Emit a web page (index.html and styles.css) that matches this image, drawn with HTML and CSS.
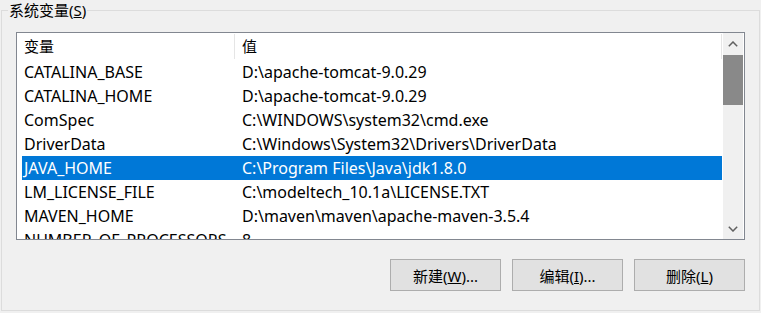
FILE: index.html
```html
<!DOCTYPE html>
<html lang="zh-CN">
<head>
    <meta charset="UTF-8">
    <title>系统变量</title>
    <link rel="stylesheet" href="styles.css">
</head>
<body>
    <fieldset class="group">
        <legend>系统变量(<u>S</u>)</legend>

        <div class="list">
            <div class="table">
                <div class="head">
                    <div class="head-cell">变量</div>
                    <div class="head-cell">值</div>
                </div>
                <div class="row"><span class="name">CATALINA_BASE</span><span class="value">D:\apache-tomcat-9.0.29</span></div>
                <div class="row"><span class="name">CATALINA_HOME</span><span class="value">D:\apache-tomcat-9.0.29</span></div>
                <div class="row"><span class="name">ComSpec</span><span class="value">C:\WINDOWS\system32\cmd.exe</span></div>
                <div class="row"><span class="name">DriverData</span><span class="value">C:\Windows\System32\Drivers\DriverData</span></div>
                <div class="row selected"><span class="name">JAVA_HOME</span><span class="value">C:\Program Files\Java\jdk1.8.0</span></div>
                <div class="row"><span class="name">LM_LICENSE_FILE</span><span class="value">C:\modeltech_10.1a\LICENSE.TXT</span></div>
                <div class="row"><span class="name">MAVEN_HOME</span><span class="value">D:\maven\maven\apache-maven-3.5.4</span></div>
                <div class="row"><span class="name">NUMBER_OF_PROCESSORS</span><span class="value">8</span></div>
            </div>

            <div class="scrollbar">
                <div class="arrow">
                    <svg width="10" height="6" viewBox="0 0 10 6"><polyline points="0.8,5.2 5,1 9.2,5.2" fill="none" stroke="#606060" stroke-width="1.5"/></svg>
                </div>
                <div class="thumb"></div>
                <div class="track"></div>
                <div class="arrow">
                    <svg width="10" height="6" viewBox="0 0 10 6"><polyline points="0.8,0.8 5,5 9.2,0.8" fill="none" stroke="#606060" stroke-width="1.5"/></svg>
                </div>
            </div>
        </div>

        <div class="actions">
            <button type="button">新建(<u>W</u>)...</button>
            <button type="button">编辑(<u>I</u>)...</button>
            <button type="button">删除(<u>L</u>)</button>
        </div>
    </fieldset>
</body>
</html>
```

FILE: styles.css
```css
body {
    margin: 0;
    background-color: #f0f0f0;
    font-family: "Noto Sans", "Noto Sans CJK SC", sans-serif;
    font-size: 15px;
    color: #000;
    overflow: hidden;
}

.group {
    margin: 0 1px 0 1px;
    padding: 0 14px 19px 6px;
    border: 1px solid #dcdcdc;
}

.group legend {
    padding: 0 1px;
    line-height: 20px;
}

.list {
    display: flex;
    height: 206px;
    margin: 12px 0 0 8px;
    border: 1px solid #828790;
    background-color: #fff;
}

.table {
    flex: 1;
    overflow: hidden;
}

.head {
    display: grid;
    grid-template-columns: 218px 487px;
    height: 27px;
}

.head-cell {
    margin: 1px 0;
    padding-left: 7px;
    line-height: 25px;
    border-right: 1px solid #e5e5e5;
}

.row {
    display: grid;
    grid-template-columns: 213px 1fr;
    height: 24px;
    margin-left: 5px;
    line-height: 24px;
    font-size: 16px;
    white-space: nowrap;
}

.row .name {
    padding-left: 2px;
}

.row .value {
    padding-left: 7px;
}

.row.selected {
    background-color: #0078d7;
    color: #fff;
}

.scrollbar {
    display: flex;
    flex-direction: column;
    width: 20px;
    margin-left: 1px;
    margin-right: 1px;
    background-color: #f0f0f0;
}

.arrow {
    display: flex;
    align-items: center;
    justify-content: center;
    height: 21px;
}

.thumb {
    height: 50px;
    margin-top: 1px;
    background-color: #898989;
}

.track {
    flex: 1;
}

.actions {
    display: flex;
    justify-content: flex-end;
    gap: 11px;
    margin-top: 19px;
}

.actions button {
    width: 111px;
    height: 32px;
    padding: 0;
    border: 1px solid #adadad;
    background-color: #e1e1e1;
    font-family: inherit;
    font-size: 15px;
    color: #000;
}
```
